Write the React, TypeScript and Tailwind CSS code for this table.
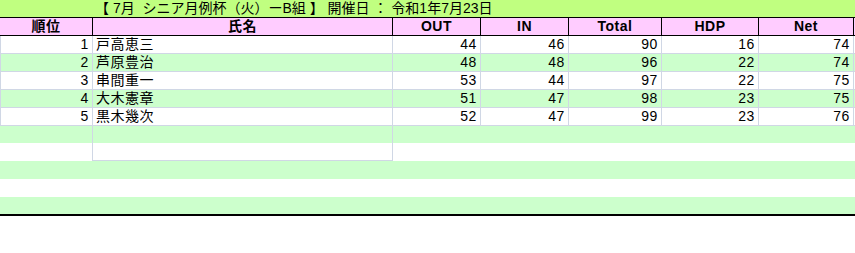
import React from "react";

const cols = ["w-[93px]", "w-[300px]", "w-[88px]", "w-[88px]", "w-[93px]", "w-[97px]", "w-[95px]"];

const headers = ["順位", "氏名", "OUT", "IN", "Total", "HDP", "Net"];

const rows = [
  { rank: 1, name: "戸高恵三", out: 44, inn: 46, total: 90, hdp: 16, net: 74 },
  { rank: 2, name: "芦原豊治", out: 48, inn: 48, total: 96, hdp: 22, net: 74 },
  { rank: 3, name: "串間重一", out: 53, inn: 44, total: 97, hdp: 22, net: 75 },
  { rank: 4, name: "大木憲章", out: 51, inn: 47, total: 98, hdp: 23, net: 75 },
  { rank: 5, name: "黒木幾次", out: 52, inn: 47, total: 99, hdp: 23, net: 76 },
];

const font = {
  fontFamily: '"Liberation Sans", "Noto Sans CJK JP", sans-serif',
};

function App() {
  return (
    <div className="w-[855px] h-[253px] bg-white text-black overflow-hidden" style={font}>
      {/* title */}
      <div className="h-[17px] bg-[#c0ff80] pl-[95px] text-[14px] leading-[17px] whitespace-pre">
        【 7月  シニア月例杯（火）ーB組 】 開催日 ： 令和1年7月23日
      </div>

      {/* header */}
      <div className="flex w-[855px] h-[19px] border-y border-black bg-[#ffccff]">
        {headers.map((h, i) => (
          <div
            key={h}
            className={`${cols[i]} border-r border-black text-center text-[14px] font-bold leading-[17px] tracking-[0.5px]`}
          >
            {h}
          </div>
        ))}
      </div>

      {/* data */}
      {rows.map((r, idx) => {
        const vals = [r.rank, r.name, r.out, r.inn, r.total, r.hdp, r.net];
        return (
          <div
            key={r.rank}
            className={`flex h-[18px] border-b border-[#d0d7e5] ${idx % 2 === 1 ? "bg-[#ccffcc]" : "bg-white"}`}
          >
            {vals.map((v, i) => (
              <div
                key={i}
                className={`${cols[i]} ${i === 0 ? "border-l" : ""} border-r border-[#d0d7e5] text-[14px] leading-[17px] ${
                  i === 1 ? "text-left pl-[3px] tracking-[0.5px]" : "text-right pr-[3px] tracking-[0.6px]"
                }`}
              >
                {v}
              </div>
            ))}
          </div>
        );
      })}

      {/* empty rows */}
      <div className="flex h-[17px] bg-[#ccffcc]">
        <div className="w-[93px] border-r border-[#d0d7e5]" />
        <div className="w-[300px] border-r border-[#d0d7e5]" />
      </div>
      <div className="flex h-[18px] bg-white">
        <div className="w-[93px] border-r border-[#d0d7e5]" />
        <div className="w-[300px] border-r border-b border-[#d0d7e5]" />
      </div>
      <div className="h-[18px] bg-[#ccffcc]" />
      <div className="h-[18px] bg-white" />
      <div className="h-[19px] bg-[#ccffcc] border-b-2 border-black" />
    </div>
  );
}

export default App;
